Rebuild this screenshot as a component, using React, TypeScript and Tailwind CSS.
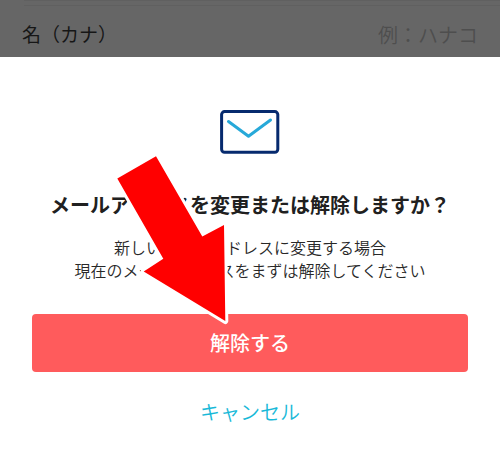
const FONT = "font-['Noto_Sans_CJK_JP',sans-serif]";

function MailIcon() {
  return (
    <svg viewBox="0 0 60 44" className="h-11 w-15" fill="none" aria-hidden="true">
      <rect x="1.6" y="1.6" width="56.2" height="40.6" rx="3" stroke="#062a6e" strokeWidth="3" />
      <path d="M8.5 11.5L28.5 26.3L50.5 10" stroke="#27a9d9" strokeWidth="3" strokeLinecap="round" strokeLinejoin="round" />
    </svg>
  );
}

function PointerArrow() {
  return (
    <svg
      viewBox="0 0 120 180"
      className="pointer-events-none absolute top-[93px] left-1/2 h-[180px] w-[120px] -translate-x-[140px]"
      aria-hidden="true"
    >
      <path
        d="M46 6.3L7.3 28.6L53.3 108.8L33.7 121.4L115.3 171L114 75L92.3 86.5Z"
        fill="#ff0000"
        stroke="#ffffff"
        strokeWidth="6"
        strokeLinejoin="round"
        paintOrder="stroke"
      />
    </svg>
  );
}

export default function App() {
  return (
    <main className={`${FONT} min-h-screen bg-white`}>
      <div className="h-[57px] bg-[#666666] text-xl">
        <div className="ml-6 h-[6px] border-y border-[#606060]" />
        <div className="flex items-center justify-between pt-3 pr-[22px] pl-[22px]">
          <label htmlFor="first-name-kana" className="shrink-0 text-[19px] leading-8 text-[#161616]">
            名（カナ）
          </label>
          <input
            id="first-name-kana"
            type="text"
            placeholder="例：ハナコ"
            className="h-8 w-40 bg-transparent text-right font-[350] placeholder:text-[#4e4e4e] focus:outline-none"
          />
        </div>
      </div>

      <section
        role="dialog"
        aria-labelledby="dialog-title"
        className="relative flex flex-col items-center bg-white px-8 pt-[53px] pb-8 text-center"
      >
        <MailIcon />
        <h1 id="dialog-title" className="mt-[35px] text-xl leading-8 font-bold whitespace-nowrap text-[#202020]">
          メールアドレスを変更または解除しますか？
        </h1>
        <p className="mt-[15px] text-base leading-[23px] font-[350] whitespace-nowrap text-[#282828]">
          新しいメールアドレスに変更する場合
          <br />
          現在のメールアドレスをまずは解除してください
        </p>
        <button type="button" className="mt-8 h-[58px] w-full rounded-sm bg-[#ff5b5c] text-xl font-medium text-white">
          解除する
        </button>
        <button type="button" className="mt-6 h-8 px-4 text-xl leading-8 font-[350] text-[#18b9d8]">
          キャンセル
        </button>
        <PointerArrow />
      </section>
    </main>
  );
}
